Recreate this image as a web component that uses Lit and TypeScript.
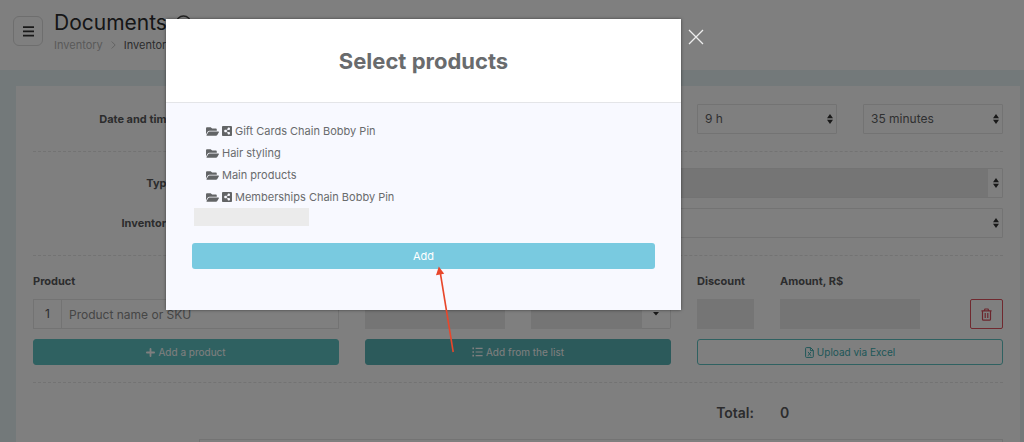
import { LitElement, html, svg, css } from "lit";
import { customElement, property } from "lit/decorators.js";

const folderIcon = html`<svg class="icon folder" viewBox="0 56 576 400" aria-hidden="true">
  <path d="M572.694 292.093L500.27 416.248A63.997 63.997 0 0 1 444.989 448H45.025c-18.523 0-30.064-20.093-20.731-36.093l72.424-124.155A64 64 0 0 1 152 256h399.964c18.523 0 30.064 20.093 20.73 36.093zM152 224h328v-48c0-26.51-21.49-48-48-48H272l-64-64H48C21.49 64 0 85.49 0 112v278.046l69.077-118.418C86.214 242.25 117.989 224 152 224z"/>
</svg>`;

const shareIcon = html`<svg class="icon share" viewBox="0 0 448 448" aria-hidden="true">
  <path fill-rule="evenodd" d="M448 48v352c0 27-21 48-48 48H48c-27 0-48-21-48-48V48C0 21 21 0 48 0h352c27 0 48 21 48 48zM304 264c-14 0-27 5-37 14l-60-38c2-10 2-22 0-32l60-38c10 9 23 14 37 14 31 0 56-25 56-56s-25-56-56-56-56 25-56 56c0 5 1 11 2 16l-60 38c-10-9-23-14-37-14-31 0-56 25-56 56s25 56 56 56c14 0 27-5 37-14l60 38c-1 5-2 11-2 16 0 31 25 56 56 56s56-25 56-56-25-56-56-56z"/>
</svg>`;

const plusIcon = html`<svg class="icon" width="9" height="9" viewBox="0 0 9 9" aria-hidden="true">
  <path d="M4.5 .9v7.2M.9 4.5h7.2" fill="none" stroke="currentColor" stroke-width="1.8" stroke-linecap="round"/>
</svg>`;

const listIcon = html`<svg class="icon" width="11" height="10" viewBox="0 0 11 10" aria-hidden="true">
  <path d="M3.6 1.4h7M3.6 5h7M3.6 8.6h7" fill="none" stroke="currentColor" stroke-width="1.1"/>
  <path d="M.4.6h1.6v1.6H.4zM.4 4.2h1.6v1.6H.4zM.4 7.8h1.6v1.6H.4z"/>
</svg>`;

const excelIcon = html`<svg class="icon" width="9" height="11" viewBox="0 0 9 11" aria-hidden="true">
  <path d="M1.4.6h4.2l2.7 2.7v6.3a.8.8 0 0 1-.8.8H1.4a.8.8 0 0 1-.8-.8V1.4a.8.8 0 0 1 .8-.8zM5.4.8v2.8h2.8M3 4.9l3 3.9M6 4.9 3 8.8" fill="none" stroke="currentColor"/>
</svg>`;

const trashIcon = html`<svg class="icon" width="11" height="13" viewBox="0 0 11 13" aria-hidden="true">
  <path d="M.4 2.8h10.2M3.3 2.6 4 1h3l.7 1.6M1.5 3v8.2a1 1 0 0 0 1 1h6a1 1 0 0 0 1-1V3M4.2 5v5M6.8 5v5" fill="none" stroke="currentColor" stroke-width="1.2"/>
</svg>`;

const sortIcon = html`<svg class="sort" width="6" height="10" viewBox="0 0 6 10" aria-hidden="true">
  <path d="M3 0l3 4.2H0zM3 10l3-4.2H0z"/>
</svg>`;

const catalog = [
  { name: "Gift Cards Chain Bobby Pin", shared: true },
  { name: "Hair styling", shared: false },
  { name: "Main products", shared: false },
  { name: "Memberships Chain Bobby Pin", shared: true },
];

@customElement("select-box")
class SelectBox extends LitElement {
  @property() value = "";
  @property() label = "";
  @property({ type: Boolean }) masked = false;

  static styles = css`
    :host { display: block; position: relative; }
    select {
      display: block; width: 100%; height: 30px; box-sizing: border-box;
      appearance: none; margin: 0; padding: 0 20px 0 7px;
      border: 1px solid #e6e6e6; border-radius: 1px; background: #fff;
      color: #5f6163; font: 12px/20px Inter, sans-serif;
    }
    .masked { background: linear-gradient(#ebebeb, #ebebeb) left / calc(100% - 14px) 100% no-repeat #fff; }
    .sort { position: absolute; right: 4px; top: 10px; fill: #333; pointer-events: none; }
  `;

  render() {
    return html`<select class=${this.masked ? "masked" : ""} aria-label=${this.label}>
        <option>${this.value}</option>
      </select>${sortIcon}`;
  }
}

@customElement("product-picker")
class ProductPicker extends LitElement {
  static styles = css`
    :host { display: flex; align-items: flex-start; gap: 7px; }
    .dialog {
      flex: 0 1 515px; min-width: 0; background: #f8f9ff; color: #696b6d;
      box-shadow: 0 0 3px rgba(0, 0, 0, 0.5);
    }
    .head {
      display: flex; align-items: center; justify-content: center;
      height: 83px; background: #fff; border-bottom: 1px solid #e4e5e8;
    }
    h2 { margin: 0; font-size: 22px; line-height: 28px; font-weight: 700; }
    .body { padding: 17px 26px 41px; }
    ul { margin: 0; padding: 0 0 0 14px; list-style: none; }
    li { display: flex; align-items: center; gap: 3px; height: 22px; font-size: 11px; line-height: 22px; }
    .icon { fill: #626466; flex: none; }
    .folder { width: 13px; height: 9px; }
    .share { width: 10px; height: 10px; }
    .pending { width: 115px; height: 18px; margin: 0 0 17px 2px; background: #ebebeb; }
    .add {
      display: block; width: 100%; height: 26px; padding: 0; border: 0; border-radius: 3px;
      background: #79cae0; color: #fff; font: 11px/26px Inter, sans-serif;
    }
    .close { display: block; margin-top: 10px; padding: 0; border: 0; background: none; }
    .close svg { display: block; }
  `;

  render() {
    return html`
      <section class="dialog" role="dialog" aria-labelledby="title">
        <header class="head"><h2 id="title">Select products</h2></header>
        <div class="body">
          <ul>
            ${catalog.map((c) => html`<li>${folderIcon}${c.shared ? shareIcon : ""}<span>${c.name}</span></li>`)}
          </ul>
          <div class="pending"></div>
          <button class="add">Add</button>
        </div>
      </section>
      <button class="close" aria-label="Close">
        <svg width="16" height="16" viewBox="0 0 16 16"><path d="M1 1l14 14M15 1L1 15" stroke="#eee" stroke-width="1.3"/></svg>
      </button>
    `;
  }
}

@customElement("app-root")
class AppRoot extends LitElement {
  static styles = css`
    :host {
      display: block; position: relative; height: 100vh; overflow: hidden;
      background: #e6f3f4; color: #58595b; font: 12px/20px Inter, sans-serif;
    }
    .top { display: flex; gap: 11px; height: 70px; box-sizing: border-box; padding: 12px 13px; background: #fff; }
    .menu {
      display: flex; align-items: center; justify-content: center; width: 30px; height: 30px;
      margin-top: 4px; padding: 0; border: 1px solid #dcdcdc; border-radius: 6px; background: #fff;
    }
    h1 { display: flex; align-items: center; gap: 8px; margin: 0; font-size: 21px; line-height: 22px; font-weight: 400; color: #2c2d2e; }
    .crumbs { display: flex; align-items: center; gap: 8px; font-size: 11px; line-height: 22px; color: #58595b; }
    .crumbs a { color: #b4b4b4; text-decoration: none; }
    .card { margin: 16px 4px 0 16px; padding: 18px 17px 0; background: #fff; }
    .grid { display: grid; grid-template-columns: repeat(12, minmax(0, 1fr)); column-gap: 26px; align-items: center; }
    .gap { margin-top: 10px; }
    .s1 { grid-column: span 1; }
    .s2 { grid-column: span 2; }
    .s4 { grid-column: span 4; }
    .s6 { grid-column: span 6; }
    .s10 { grid-column: span 10; }
    .label { text-align: right; font-size: 11px; font-weight: 700; }
    .rule { height: 0; margin: 17px 0 16px; border: 0; border-top: 1px dashed #e6e6e6; }
    .heads { font-size: 11px; line-height: 18px; font-weight: 700; margin-bottom: 9px; }
    input {
      display: block; width: 100%; height: 30px; min-width: 0; box-sizing: border-box; padding: 0 7px;
      border: 1px solid #e6e6e6; border-radius: 0; background: #fff; color: #58595b; font: 12px/20px Inter, sans-serif;
    }
    input::placeholder { color: #8c8c8c; opacity: 1; }
    .line { display: flex; }
    .num { flex: none; width: 27px; height: 28px; border: 1px solid #e6e6e6; border-right: 0; line-height: 28px; text-align: center; }
    .mask { height: 30px; background: #ebebeb; }
    .unit { display: flex; }
    .unit .mask { flex: 1; }
    .drop {
      display: flex; align-items: center; justify-content: center; width: 29px; height: 30px; padding: 0;
      border: 1px solid #e6e6e6; border-left: 0; border-radius: 0 2px 2px 0; background: #fff;
    }
    .delete {
      display: flex; align-items: center; justify-content: center; justify-self: end;
      width: 33px; height: 30px; padding: 0; border: 1px solid #e0525f; border-radius: 2px; background: #fff; color: #d64a58;
    }
    .btn {
      display: flex; align-items: center; justify-content: center; gap: 3px; height: 26px; padding: 0;
      border: 1px solid #5fc2c2; border-radius: 3px; background: #5fc2c2; color: #fff; font: 10px/20px Inter, sans-serif;
    }
    .btn.active { background: #58b4b6; border-color: #58b4b6; }
    .btn.outline { background: #fff; color: #40aeb0; }
    .icon { fill: currentColor; flex: none; }
    .total { font-size: 14px; font-weight: 600; margin-top: 20px; }
    .total .label { font-size: 14px; font-weight: 600; }
    .history { height: 60px; margin-top: 16px; border: 1px solid #e6e6e6; }
    .backdrop { position: absolute; inset: 0; padding: 19px 16px 0 166px; background: rgba(0, 0, 0, 0.5); }
    .arrow { position: absolute; left: 434px; top: 266px; pointer-events: none; }
  `;

  render() {
    return html`
      <header class="top">
        <button class="menu" aria-label="Menu">
          <svg width="11" height="11" viewBox="0 0 11 11"><path d="M0 1.2h11M0 5.4h11M0 9.6h11" stroke="#333" stroke-width="1.7"/></svg>
        </button>
        <div>
          <h1>Documents
            <svg width="17" height="17" viewBox="0 0 17 17" aria-hidden="true" fill="none" stroke="#444" stroke-width="1.3">
              <circle cx="8.5" cy="8.5" r="7.5"/><path d="M6.3 6.8a2.2 2.2 0 1 1 3 2c-.6.3-.8.6-.8 1.2M8.5 11.5v1.2"/>
            </svg>
          </h1>
          <nav class="crumbs">
            <a href="#">Inventory</a>
            <svg width="5" height="8" viewBox="0 0 5 8" aria-hidden="true"><path d="M.7.5l3.5 3.5L.7 7.5" fill="none" stroke="#c4c4c4"/></svg>
            <span>Inventory</span>
          </nav>
        </div>
      </header>
      <main class="card">
        <div class="grid">
          <label class="label s2" for="date">Date and time</label>
          <div class="s6"><input id="date" /></div>
          <select-box class="s2" label="Hour" value="9 h"></select-box>
          <select-box class="s2" label="Minutes" value="35 minutes"></select-box>
        </div>
        <hr class="rule" />
        <div class="grid">
          <span class="label s2">Type</span>
          <select-box class="s10" label="Type" masked></select-box>
        </div>
        <div class="grid gap">
          <span class="label s2">Inventory</span>
          <select-box class="s10" label="Inventory"></select-box>
        </div>
        <hr class="rule" />
        <div class="grid heads">
          <span class="s4">Product</span><span class="s4"></span>
          <span class="s1">Discount</span><span class="s2">Amount, R$</span>
        </div>
        <div class="grid">
          <div class="line s4"><span class="num">1</span><input aria-label="Product" placeholder="Product name or SKU" /></div>
          <div class="mask s2"></div>
          <div class="unit s2">
            <div class="mask"></div>
            <button class="drop" aria-label="Unit"><svg width="6" height="4" viewBox="0 0 6 4"><path d="M0 0h6L3 3.6z" fill="#333"/></svg></button>
          </div>
          <div class="mask s1"></div>
          <div class="mask s2"></div>
          <button class="delete s1" aria-label="Delete">${trashIcon}</button>
        </div>
        <div class="grid gap">
          <button class="btn s4">${plusIcon}Add a product</button>
          <button class="btn active s4">${listIcon}Add from the list</button>
          <button class="btn outline s4">${excelIcon}Upload via Excel</button>
        </div>
        <hr class="rule" />
        <div class="grid total">
          <span class="s6"></span><span class="s2"></span>
          <span class="label s1">Total:</span><span class="s1">0</span>
        </div>
        <div class="grid"><span class="s2"></span><div class="history s10"></div></div>
      </main>
      <div class="backdrop"><product-picker></product-picker></div>
      <svg class="arrow" width="24" height="90" viewBox="0 0 24 90" aria-hidden="true">
        ${svg`<path d="M19.2 86L6.5 8" stroke="#e8472b" stroke-width="1.6"/><path d="M4.8 .5L10.2 7.8 2 9.2z" fill="#e8472b"/>`}
      </svg>
    `;
  }
}
